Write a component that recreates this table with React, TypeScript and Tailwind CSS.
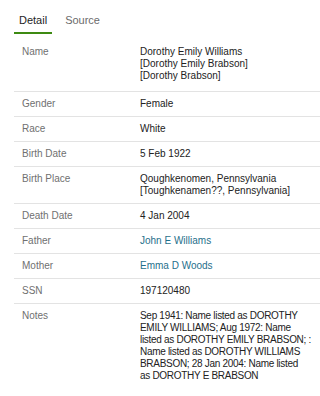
import { useState } from "react";

type Row = {
  label: string;
  lines?: string[];
  link?: string;
};

const rows: Row[] = [
  {
    label: "Name",
    lines: [
      "Dorothy Emily Williams",
      "[Dorothy Emily Brabson]",
      "[Dorothy Brabson]",
    ],
  },
  { label: "Gender", lines: ["Female"] },
  { label: "Race", lines: ["White"] },
  { label: "Birth Date", lines: ["5 Feb 1922"] },
  {
    label: "Birth Place",
    lines: ["Qoughkenomen, Pennsylvania", "[Toughkenamen??, Pennsylvania]"],
  },
  { label: "Death Date", lines: ["4 Jan 2004"] },
  { label: "Father", link: "John E Williams" },
  { label: "Mother", link: "Emma D Woods" },
  { label: "SSN", lines: ["197120480"] },
  {
    label: "Notes",
    lines: [
      "Sep 1941: Name listed as DOROTHY",
      "EMILY WILLIAMS; Aug 1972: Name",
      "listed as DOROTHY EMILY BRABSON; :",
      "Name listed as DOROTHY WILLIAMS",
      "BRABSON; 28 Jan 2004: Name listed",
      "as DOROTHY E BRABSON",
    ],
  },
];

export default function App() {
  const [tab, setTab] = useState("detail");

  return (
    <div className="w-[320px] h-[396px] bg-white font-['Liberation_Sans',Arial,sans-serif] overflow-hidden">
      <div className="flex gap-[8px] pl-[14px]">
        <button
          onClick={() => setTab("detail")}
          className={`px-[5px] pt-[14px] pb-[5px] text-[11px] leading-[13px] border-b-2 ${
            tab === "detail"
              ? "border-[#3d8a12] text-[#1e1e1e]"
              : "border-transparent text-[#6b6b6b]"
          }`}
        >
          Detail
        </button>
        <button
          onClick={() => setTab("source")}
          className={`px-[5px] pt-[14px] pb-[5px] text-[11px] leading-[13px] border-b-2 ${
            tab === "source"
              ? "border-[#3d8a12] text-[#1e1e1e]"
              : "border-transparent text-[#6b6b6b]"
          }`}
        >
          Source
        </button>
      </div>

      <div className="mt-[9px] ml-[14px] text-[10px] leading-[12px]">
        {rows.map((row, i) => (
          <div
            key={row.label}
            className={`flex pl-[8px] pr-[6px] ${
              i === 0 ? "pt-[3px] pb-[9px]" : "pt-[6px] pb-[6px]"
            } ${i < rows.length - 1 ? "border-b border-[#e3e3e3]" : ""}`}
          >
            <div className="w-[118px] shrink-0 text-[#707070]">{row.label}</div>
            <div
              className={`flex-1 text-[#222] ${
                row.label === "Notes" ? "tracking-[-0.3px]" : ""
              }`}
            >
              {row.link ? (
                <a href="#" className="text-[#1f6f8b]">
                  {row.link}
                </a>
              ) : (
                row.lines?.map((line) => (
                  <div key={line} className="whitespace-nowrap">
                    {line}
                  </div>
                ))
              )}
            </div>
          </div>
        ))}
      </div>
    </div>
  );
}
